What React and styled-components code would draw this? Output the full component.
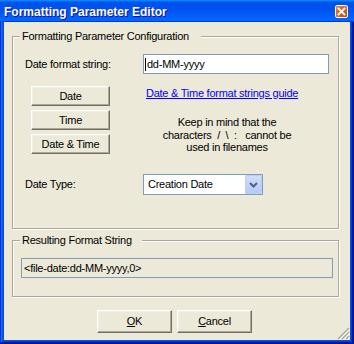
import React from 'react';
import styled, { createGlobalStyle } from 'styled-components';

const Global = createGlobalStyle`
  html, body { margin: 0; padding: 0; background: #fff; }
  body { font-family: "Liberation Sans", Arial, sans-serif; }
`;

const Window = styled.div`
  width: 354px;
  height: 344px;
  box-sizing: border-box;
  display: flex;
  flex-direction: column;
  background: #0a50e0;
  box-shadow: inset -1px -1px #00138c, inset 1px 1px #0831d9,
    inset -2px -2px #001ea0, inset 2px 2px #166aee,
    inset -3px -3px #003bda, inset 3px 3px #0855dd;
`;

const TitleBar = styled.div`
  height: 22px;
  flex: none;
  display: flex;
  align-items: center;
  justify-content: space-between;
  padding: 0 6px 0 4px;
  background: linear-gradient(180deg, #0997ff, #0053ee 10%, #0050ee 40%, #0066ff 88%, #0066ff 93%, #005bff 95%, #003dd7 97%, #003dd7);
`;

const Title = styled.span`
  color: #fff;
  font-weight: bold;
  font-size: 12px;
  line-height: 14px;
  padding-top: 2px;
  text-shadow: 1px 1px #0f1089;
`;

const CloseBox = styled.div`
  width: 13px;
  height: 13px;
  margin-top: 1px;
  box-sizing: border-box;
  border: 1px solid #fff;
  border-radius: 2px;
  background: radial-gradient(circle at 90% 90%, #cc4600 0%, #dc6527 55%, #e57d4c 100%);
  display: flex;
  align-items: center;
  justify-content: center;
`;

const Client = styled.div`
  flex: 1;
  margin: 0 4px 4px 4px;
  background: #ece9d8;
  padding: 14px 11px 0 8px;
  position: relative;
  font-size: 11px;
  letter-spacing: -0.25px;
  color: #000;
`;

const GroupBox = styled.div`
  position: relative;
  height: ${p => p.$h}px;
  box-sizing: border-box;
  border: 1px solid #aca899;
  box-shadow: inset 1px 1px #fff, 1px 1px #fff;
  padding: ${p => p.$pad};
  margin-top: ${p => p.$mt || 0}px;
`;

const Caption = styled.span`
  position: absolute;
  top: -7px;
  left: 7px;
  background: #ece9d8;
  padding: 0 ${p => p.$gap}px 0 2px;
  line-height: 13px;
`;

const Row = styled.div`
  display: flex;
  align-items: ${p => p.$align || 'center'};
  margin-top: ${p => p.$mt || 0}px;
`;

const Label = styled.span`
  width: 118px;
  flex: none;
  line-height: 13px;
`;

const Field = styled.div`
  width: ${p => p.$w}px;
  height: 20px;
  box-sizing: border-box;
  border: 1px solid #7f9db9;
  background: ${p => (p.$readOnly ? '#ece9d8' : '#fff')};
  display: flex;
  align-items: center;
  padding-left: ${p => p.$pl}px;
  line-height: 13px;
  white-space: nowrap;
`;

const Caret = styled.span`
  display: inline-block;
  width: 1px;
  height: 13px;
  background: #000;
  margin-right: 1px;
`;

const ButtonStack = styled.div`
  margin-left: 6px;
  width: 79px;
  display: flex;
  flex-direction: column;
  gap: 4px;
`;

const Button = styled.button`
  width: ${p => p.$w}px;
  height: ${p => p.$h}px;
  box-sizing: border-box;
  padding: 0;
  font: inherit;
  letter-spacing: inherit;
  color: #000;
  background: #ece9d8;
  border: 1px solid;
  border-color: #fff #716f64 #716f64 #fff;
  box-shadow: inset -1px -1px #aca899, inset 1px 1px #f1efe2;
  line-height: 13px;
`;

const Info = styled.div`
  margin-left: 33px;
  width: 168px;
  display: flex;
  flex-direction: column;
`;

const GuideLink = styled.a`
  color: #0000ff;
  text-decoration: underline;
  line-height: 13px;
  padding-left: 3px;
  margin-top: 1px;
  cursor: pointer;
`;

const Note = styled.div`
  margin-top: 16px;
  text-align: center;
  line-height: 12.7px;
  white-space: pre;
`;

const Select = styled.div`
  width: 120px;
  height: 21px;
  box-sizing: border-box;
  border: 1px solid #7f9db9;
  background: #fff;
  display: flex;
  align-items: center;
  justify-content: space-between;
  padding-left: 4px;
  line-height: 13px;
`;

const DropButton = styled.div`
  width: 17px;
  height: 19px;
  box-sizing: border-box;
  border: 1px solid #bacdf6;
  border-radius: 1px;
  background: linear-gradient(180deg, #d0dcfb, #b6c9f7);
  display: flex;
  align-items: center;
  justify-content: center;
`;

const Footer = styled.div`
  display: flex;
  gap: 5px;
  margin-top: 13px;
  padding-left: 85px;
`;

const Grip = styled.svg`
  position: absolute;
  right: 0;
  bottom: 0;
`;

export default function App() {
  return (
    <>
      <Global />
      <Window>
        <TitleBar>
          <Title>Formatting Parameter Editor</Title>
          <CloseBox>
            <svg width="9" height="9" viewBox="0 0 9 9">
              <path d="M1.5 1.5 L7.5 7.5 M7.5 1.5 L1.5 7.5" stroke="#fff" strokeWidth="1.8" strokeLinecap="square" />
            </svg>
          </CloseBox>
        </TitleBar>
        <Client>
          <GroupBox $h={193} $pad="17px 8px 0 12px">
            <Caption $gap={12}>Formatting Parameter Configuration</Caption>
            <Row>
              <Label>Date format string:</Label>
              <Field $w={186} $pl={1}>
                <Caret />dd-MM-yyyy
              </Field>
            </Row>
            <Row $mt={12} $align="flex-start">
              <ButtonStack>
                <Button $w={79} $h={20}>Date</Button>
                <Button $w={79} $h={20}>Time</Button>
                <Button $w={79} $h={20}>Date &amp; Time</Button>
              </ButtonStack>
              <Info>
                <GuideLink>Date &amp; Time format strings guide</GuideLink>
                <Note>{'Keep in mind that the\ncharacters  /  \\  :   cannot be\nused in filenames'}</Note>
              </Info>
            </Row>
            <Row $mt={20}>
              <Label>Date Type:</Label>
              <Select>
                <span>Creation Date</span>
                <DropButton>
                  <svg width="9" height="6" viewBox="0 0 9 6">
                    <path d="M1 1 L4.5 4.5 L8 1" fill="none" stroke="#4d6185" strokeWidth="2" />
                  </svg>
                </DropButton>
              </Select>
            </Row>
          </GroupBox>
          <GroupBox $h={57} $mt={11} $pad="17px 5px 0 8px">
            <Caption $gap={10}>Resulting Format String</Caption>
            <Field $w={312} $pl={2} $readOnly>&lt;file-date:dd-MM-yyyy,0&gt;</Field>
          </GroupBox>
          <Footer>
            <Button $w={75} $h={23}><u>O</u>K</Button>
            <Button $w={75} $h={23}><u>C</u>ancel</Button>
          </Footer>
          <Grip width="14" height="14" viewBox="0 0 14 14">
            <path d="M13 2 L2 13 M13 6 L6 13 M13 10 L10 13" stroke="#aca899" strokeWidth="1.4" />
            <path d="M14 3 L3 14 M14 7 L7 14 M14 11 L11 14" stroke="#fff" strokeWidth="1" />
          </Grip>
        </Client>
      </Window>
    </>
  );
}
